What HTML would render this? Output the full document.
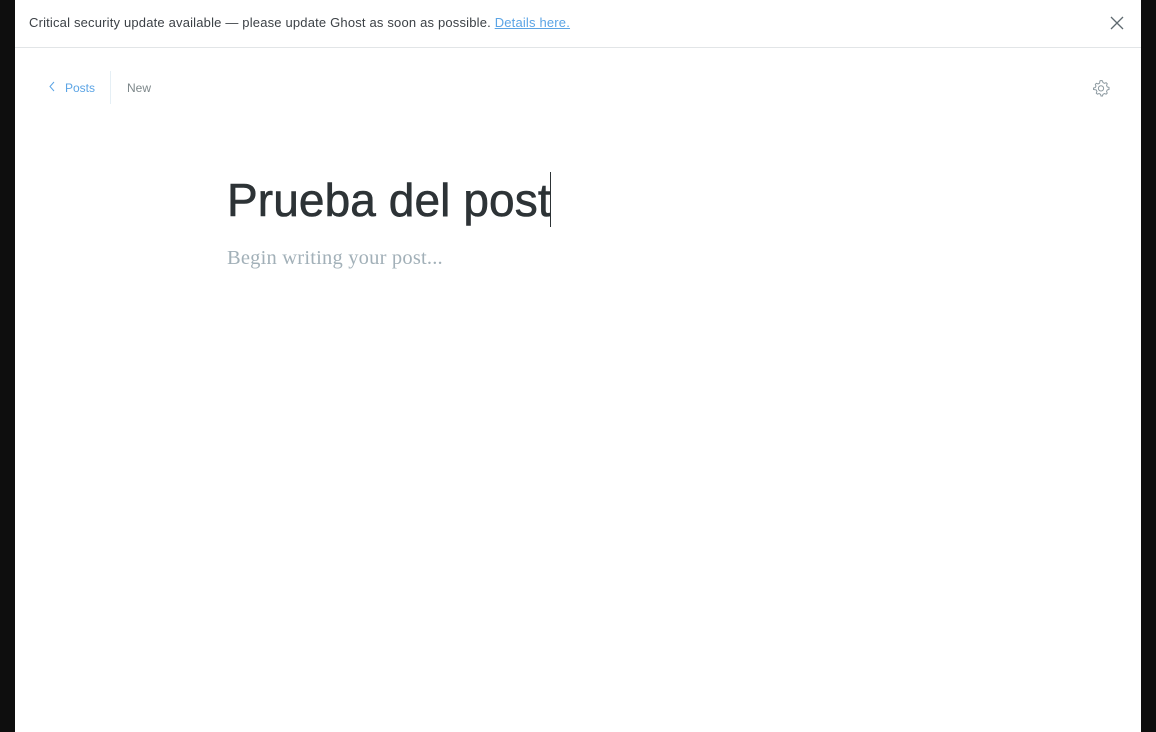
<!DOCTYPE html>
<html><head><style>
html,body{margin:0;padding:0;width:1156px;height:732px;background:#0e0e0e;overflow:hidden;font-family:"Liberation Sans",sans-serif}
.page{position:absolute;left:15px;top:0;width:1126px;height:732px;background:#fff}
.banner{position:absolute;left:0;top:0;width:1126px;height:47px;border-bottom:1px solid #e2e5e7}
.banner span.t{position:absolute;left:14px;top:15px;font-size:13px;color:#3c4146;letter-spacing:0.18px}
.banner a{color:#5ba4e5;text-decoration:underline}
.x{position:absolute;left:1095px;top:16px}
.posts{position:absolute;left:33px;top:81px;font-size:12px;color:#5ba4e5}
.div{position:absolute;left:95px;top:71px;width:1px;height:33px;background:#e5eff5}
.new{position:absolute;left:112px;top:81px;font-size:12px;color:#7d878a}
.gear{position:absolute;left:1077px;top:79px}
.title{position:absolute;left:212px;top:172px;font-size:46px;color:#2d3336;letter-spacing:0.1px;line-height:56px;-webkit-text-stroke:0.6px #2d3336}
.caret{position:absolute;left:535px;top:172px;width:1px;height:55px;background:#2d3336}
.ph{position:absolute;left:212px;top:247px;font-family:"Liberation Serif",serif;font-size:20.5px;color:#a2b0b8;letter-spacing:0.2px}
</style></head><body>
<div class="page">
<div class="banner"><span class="t">Critical security update available — please update Ghost as soon as possible. <a>Details here.</a></span>
<svg class="x" width="14" height="14" viewBox="0 0 14 14"><path d="M1 1L13 13M13 1L1 13" stroke="#5f6a70" stroke-width="1.3"/></svg></div>
<div class="posts"><svg width="8" height="11" viewBox="0 0 8 11" style="margin-right:9px"><path d="M6 1L2 5.5L6 10" stroke="#5ba4e5" fill="none" stroke-width="1"/></svg>Posts</div>
<div class="div"></div>
<div class="new">New</div>
<svg class="gear" width="18" height="18" viewBox="0 0 24 24"><path d="M12 2l2 .5.6 2.3 2 1 2.2-.9 1.5 1.5-.9 2.2 1 2 2.3.6V14l-2.3.6-1 2 .9 2.2-1.5 1.5-2.2-.9-2 1-.6 2.3h-2l-.6-2.3-2-1-2.2.9-1.5-1.5.9-2.2-1-2L2 14v-2l2.3-.6 1-2-.9-2.2 1.5-1.5 2.2.9 2-1L10.6 2.5z" fill="none" stroke="#8a979e" stroke-width="1.3"/><circle cx="12" cy="12.5" r="3.5" fill="none" stroke="#8a979e" stroke-width="1.3"/></svg>
<div class="title">Prueba del post</div>
<div class="caret"></div>
<div class="ph">Begin writing your post...</div>
</div>
</body></html>
